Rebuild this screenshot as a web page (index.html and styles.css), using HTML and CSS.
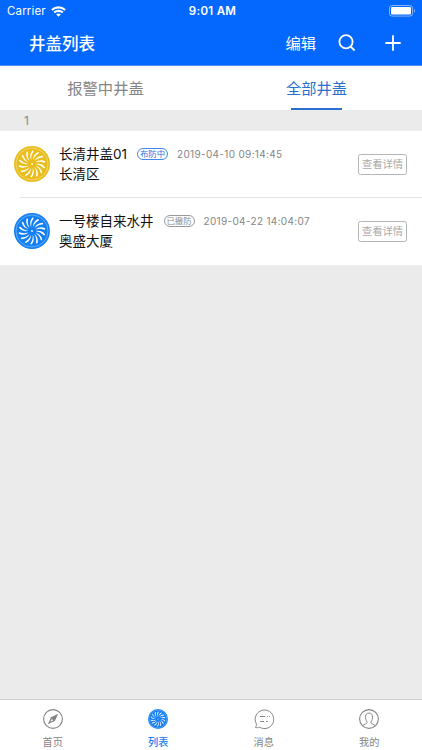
FILE: index.html
```html
<!DOCTYPE html>
<html lang="zh-CN">
  <head>
    <meta charset="UTF-8" />
    <meta name="viewport" content="width=device-width, initial-scale=1.0" />
    <title>井盖列表</title>
    <link rel="stylesheet" href="styles.css" />
  </head>
  <body>
    <!-- shared manhole cover icon -->
    <svg class="sprite" width="0" height="0">
      <defs>
        <path id="blade" d="M19.2 15.8C17.4 12.4 17.6 8.6 20.2 5.2C21.4 4.9 22 5.5 21.6 6.4C19.5 9.2 18.8 12 19.2 15.8Z" fill="#fff" />
        <symbol id="cover" viewBox="0 0 40 40">
          <circle cx="20" cy="20" r="20" fill="currentColor" />
          <circle cx="20" cy="20" r="17.8" fill="none" stroke="#fff" stroke-opacity="0.5" stroke-width="0.8" />
          <g>
            <use href="#blade" />
            <use href="#blade" transform="rotate(25.714 20 20)" />
            <use href="#blade" transform="rotate(51.429 20 20)" />
            <use href="#blade" transform="rotate(77.143 20 20)" />
            <use href="#blade" transform="rotate(102.857 20 20)" />
            <use href="#blade" transform="rotate(128.571 20 20)" />
            <use href="#blade" transform="rotate(154.286 20 20)" />
            <use href="#blade" transform="rotate(180 20 20)" />
            <use href="#blade" transform="rotate(205.714 20 20)" />
            <use href="#blade" transform="rotate(231.429 20 20)" />
            <use href="#blade" transform="rotate(257.143 20 20)" />
            <use href="#blade" transform="rotate(282.857 20 20)" />
            <use href="#blade" transform="rotate(308.571 20 20)" />
            <use href="#blade" transform="rotate(334.286 20 20)" />
          </g>
          <circle cx="20" cy="20" r="1" fill="#fff" />
        </symbol>
      </defs>
    </svg>

    <header class="header">
      <div class="status-bar">
        <div class="carrier">
          <span>Carrier</span>
          <svg width="15" height="11" viewBox="0 0 15 11" fill="none" stroke="#fff" stroke-width="2.1">
            <path d="M0.9 4.1C4.6 0.5 10.4 0.5 14.1 4.1" />
            <path d="M3.2 6.6C5.6 4.3 9.4 4.3 11.8 6.6" />
            <path d="M7.5 10.8L5.2 8.4C6.5 7.3 8.5 7.3 9.8 8.4Z" fill="#fff" stroke="none" />
          </svg>
        </div>
        <div class="clock">9:01 AM</div>
        <svg class="battery" width="27" height="12" viewBox="0 0 27 12">
          <rect x="0.5" y="0.5" width="23" height="10.6" rx="2.6" fill="none" stroke="#fff" stroke-opacity="0.5" />
          <rect x="2" y="2" width="20" height="7.6" rx="1.3" fill="#fff" />
          <path d="M25 4V7.8C26.4 7.2 26.4 4.6 25 4Z" fill="#fff" fill-opacity="0.5" />
        </svg>
      </div>
      <div class="nav">
        <h1 class="title">井盖列表</h1>
        <span class="edit">编辑</span>
        <svg class="search" width="18" height="18" viewBox="0 0 18 18" fill="none" stroke="#fff" stroke-width="1.8">
          <circle cx="8" cy="7.8" r="6.6" />
          <path d="M12.7 12.6L16.6 16.5" />
        </svg>
        <svg class="add" width="16" height="16" viewBox="0 0 16 16" fill="none" stroke="#fff" stroke-width="1.8">
          <path d="M8 0.3V15.7M0.3 8H15.7" />
        </svg>
      </div>
    </header>

    <nav class="tabs">
      <div class="tab">报警中井盖</div>
      <div class="tab active">全部井盖</div>
    </nav>

    <main class="content">
      <div class="section-title">1</div>
      <ul class="list">
        <li class="item">
          <svg class="cover yellow"><use href="#cover" /></svg>
          <div class="info">
            <div class="line">
              <span class="name">长清井盖01</span>
              <span class="badge armed">布防中</span>
              <span class="time">2019-04-10 09:14:45</span>
            </div>
            <div class="place">长清区</div>
          </div>
          <button class="detail">查看详情</button>
        </li>
        <li class="item">
          <svg class="cover blue"><use href="#cover" /></svg>
          <div class="info">
            <div class="line">
              <span class="name">一号楼自来水井</span>
              <span class="badge">已撤防</span>
              <span class="time">2019-04-22 14:04:07</span>
            </div>
            <div class="place">奥盛大厦</div>
          </div>
          <button class="detail">查看详情</button>
        </li>
      </ul>
    </main>

    <footer class="tab-bar">
      <div class="bar-item">
        <svg viewBox="0 0 20 20" fill="none" stroke="currentColor">
          <circle cx="10" cy="10" r="9.4" stroke-width="1.1" />
          <path d="M15.2 4.8L11.9 12L4.8 15.2L8 8.2Z" fill="currentColor" stroke="none" />
          <path d="M8.8 9.9L10.3 11.3L7 12.9Z" fill="#fff" stroke="none" />
        </svg>
        <span>首页</span>
      </div>
      <div class="bar-item active">
        <svg><use href="#cover" /></svg>
        <span>列表</span>
      </div>
      <div class="bar-item">
        <svg viewBox="0 0 20 20" fill="none" stroke="currentColor">
          <path d="M2.3 14.7A9.3 9.3 0 1 1 5.6 18.2C4.3 18.8 2.8 18.8 1.4 18.5C2.3 17.4 2.6 16.1 2.3 14.7Z" stroke-width="1" />
          <path d="M5.8 7.5H11.2M13 7.5H13.8M15.2 7.5H16M6.3 12.5H10M12 12.5H13.8" />
        </svg>
        <span>消息</span>
      </div>
      <div class="bar-item">
        <svg viewBox="0 0 20 20" fill="none" stroke="currentColor">
          <circle cx="10" cy="10" r="9.4" stroke-width="1.1" />
          <path d="M3.6 16.6C4.8 15.3 7.8 15 8.1 13.8C8.3 12.5 6.6 11.8 6.5 8.4C6.4 5.6 7.7 4.1 10 4.1S13.6 5.6 13.5 8.4C13.4 11.8 11.7 12.5 11.9 13.8C12.2 15 15.2 15.3 16.4 16.6" />
        </svg>
        <span>我的</span>
      </div>
    </footer>
  </body>
</html>
```
FILE: styles.css
```css
* {
  box-sizing: border-box;
}

body {
  margin: 0;
  height: 100vh;
  display: flex;
  flex-direction: column;
  overflow: hidden;
  background: #ebebeb;
  font-family: Inter, "Noto Sans CJK SC", sans-serif;
}

svg {
  display: block;
  flex-shrink: 0;
}

.sprite {
  position: absolute;
}

.header {
  height: 66px;
  background: #0468ff;
  border-bottom: 1px solid #4b8ff7;
  color: #fff;
}

.status-bar {
  height: 22px;
  padding: 0 6px 0 7px;
  display: grid;
  grid-template-columns: 1fr auto 1fr;
  align-items: center;
  font-size: 11.5px;
}

.carrier {
  display: flex;
  align-items: center;
  gap: 5px;
  letter-spacing: 0.15px;
}

.clock {
  font-weight: 600;
  letter-spacing: 0.3px;
  padding-left: 2px;
}

.battery {
  justify-self: end;
}

.nav {
  height: 41px;
  padding: 0 21px 0 29px;
  display: flex;
  align-items: center;
}

.title {
  margin: 0;
  font-size: 16.5px;
  font-weight: 500;
}

.edit {
  margin: -2px 0 0 auto;
  font-size: 15.3px;
}

.search {
  margin-left: 22px;
}

.add {
  margin-left: 29px;
}

.tabs {
  height: 44px;
  display: flex;
  background: #fff;
}

.tab {
  flex: 1;
  padding-bottom: 2px;
  display: flex;
  align-items: center;
  justify-content: center;
  position: relative;
  color: #858585;
  font-size: 15.3px;
}

.tab.active {
  color: #2a6fd0;
}

.tab.active::after {
  content: "";
  position: absolute;
  bottom: 0;
  width: 51px;
  height: 2px;
  background: #2a6fd0;
}

.content {
  flex: 1;
}

.section-title {
  height: 21px;
  padding-left: 24px;
  color: #8a8a8a;
  font-size: 12px;
  line-height: 21px;
}

.list {
  margin: 0;
  padding: 0;
  list-style: none;
  background: #fff;
}

.item {
  height: 67px;
  padding: 0 15px 0 14px;
  display: flex;
  align-items: center;
  position: relative;
}

.item + .item::before {
  content: "";
  position: absolute;
  top: -1px;
  left: 20px;
  right: 0;
  height: 1px;
  background: #e4e4e4;
}

.cover {
  width: 36px;
  height: 36px;
  margin-top: -1px;
}

.yellow {
  color: #e9bd1b;
}

.blue {
  color: #127ff5;
}

.info {
  flex: 1;
  margin-left: 9px;
  color: #111;
  font-size: 13.5px;
  line-height: 19px;
}

.line {
  display: flex;
  align-items: center;
  white-space: nowrap;
}

.place {
  margin-top: 1px;
}

.badge {
  width: 31px;
  height: 12px;
  margin: -1px 0 0 10px;
  border: 1px solid #999;
  border-radius: 6px;
  color: #8c8c8c;
  font-size: 8.4px;
  line-height: 10px;
  text-align: center;
}

.badge.armed {
  border-color: #4187ee;
  color: #2873e4;
}

.time {
  margin-left: 9px;
  color: #858585;
  font-size: 10px;
  letter-spacing: 0.33px;
}

.detail {
  width: 49px;
  height: 21px;
  padding: 0;
  border: 1px solid #b5b5b5;
  border-radius: 2.5px;
  background: #fff;
  color: #aaa;
  font-family: inherit;
  font-size: 10.3px;
  line-height: 19px;
  white-space: nowrap;
}

.tab-bar {
  height: 51px;
  display: flex;
  border-top: 1px solid #cfcfcf;
  background: #fff;
}

.bar-item {
  flex: 1;
  padding-top: 9px;
  display: flex;
  flex-direction: column;
  align-items: center;
  gap: 6px;
  color: #858585;
  font-size: 10.2px;
  line-height: 15px;
}

.bar-item svg {
  width: 20px;
  height: 20px;
}

.bar-item.active {
  color: #167ff5;
}

.bar-item.active span {
  font-weight: 500;
}
```
